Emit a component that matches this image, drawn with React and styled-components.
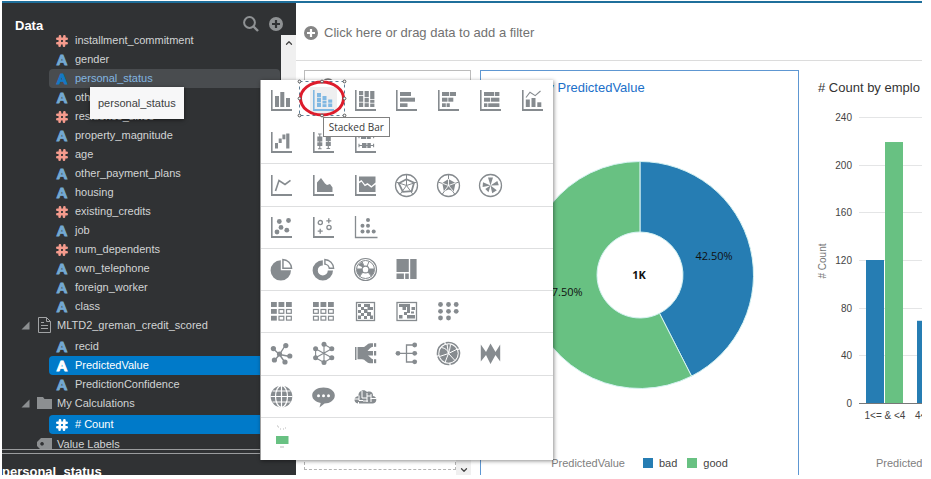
import React from "react";
import styled, { createGlobalStyle, css } from "styled-components";
import { ChevronDown, ChevronUp } from "lucide-react";

const GREY = "#868b8f";
const BLUE = "#267db3";
const GREEN = "#68c182";

const GlobalStyle = createGlobalStyle`
  * { box-sizing: border-box; }
  body {
    margin: 0;
    background: #fff;
    font-family: "Liberation Sans", Arial, sans-serif;
    font-size: 11px;
    color: #333;
  }
  button {
    font: inherit;
    color: inherit;
    background: none;
    border: 0;
    padding: 0;
    text-align: left;
    cursor: pointer;
  }
  ul { list-style: none; margin: 0; padding: 0; }
`;

const Page = styled.div`
  height: 100vh;
  padding: 1px 9px 4px 2px;
  overflow: hidden;
`;

const Frame = styled.div`
  position: relative;
  display: grid;
  grid-template-columns: 294px minmax(0, 1fr);
  height: 100%;
  border-top: 2px solid #1f6f9b;
`;

/* ---------- data sidebar ---------- */

const Sidebar = styled.aside`
  display: flex;
  flex-direction: column;
  min-height: 0;
  background: #303234;
  color: #d2d4d5;
  overflow: hidden;
`;

const SidebarHeader = styled.header`
  display: flex;
  align-items: center;
  gap: 10px;
  height: 32px;
  flex: none;
  padding: 9px 13px 0 13px;
`;

const SidebarTitle = styled.h2`
  flex: 1;
  margin: 0;
  font-size: 13px;
  line-height: 20px;
  color: #fff;
  padding-top: 4px;
`;

const ToolButton = styled.button`
  display: flex;
`;

const TreeArea = styled.div`
  display: flex;
  flex: 1;
  min-height: 0;
  overflow: hidden;
`;

const TreeList = styled.ul`
  flex: 1;
  min-width: 0;
  margin-top: -4px;
  padding-right: 1px;
`;

const ScrollTrack = styled.div`
  display: flex;
  justify-content: center;
  align-items: ${(p) => (p.$end ? "flex-end" : "flex-start")};
  flex: none;
  width: 15px;
  padding-top: ${(p) => (p.$end ? "0" : "3px")};
  background: #f0f0f0;
  color: #444;
`;

const FieldRow = styled.button`
  display: flex;
  align-items: center;
  gap: 6px;
  width: calc(100% - 47px);
  height: 19px;
  margin-left: 47px;
  padding-left: 6px;
  border-radius: 4px;
  line-height: 19px;
  ${(p) => p.$state === "hover" && css`
    background: #494c4f;
    color: #82b5e0;
  `}
  ${(p) => p.$state === "selected" && css`
    background: #007ac9;
    color: #fff;
  `}
`;

const GroupRow = styled.button`
  display: grid;
  grid-template-columns: 11px 15px auto;
  column-gap: 5px;
  align-items: center;
  width: 100%;
  height: ${(p) => (p.$open ? "18px" : "19px")};
  margin-bottom: ${(p) => (p.$open ? "3px" : "0")};
  padding-left: 19px;
  line-height: 18px;
`;

const FieldMark = styled.span`
  display: flex;
  align-items: center;
  justify-content: center;
  width: 14px;
  height: 19px;
  font-family: Lato, "Liberation Sans", sans-serif;
  font-size: 14px;
  font-weight: 900;
  -webkit-text-stroke: 1px currentColor;
  color: ${(p) => p.$color};
`;

const Details = styled.footer`
  flex: none;
  height: 26px;
  border-top: 1px solid #9a9c9e;
`;

const DetailsTitle = styled.h3`
  margin: 3px 0 0;
  padding-top: 10px;
  border-top: 1px solid #9a9c9e;
  font-size: 13px;
  line-height: 16px;
  color: #fff;
`;

const FieldTip = styled.div`
  position: absolute;
  left: 88px;
  top: 84px;
  padding: 0 8px;
  line-height: 32px;
  background: #f7f7f8;
  color: #3c3e40;
  box-shadow: 0 1px 4px rgba(0, 0, 0, 0.5);
`;

/* ---------- canvas ---------- */

const Main = styled.main`
  display: flex;
  flex-direction: column;
  min-width: 0;
  min-height: 0;
`;

const FilterBar = styled.div`
  display: flex;
  align-items: center;
  flex: none;
  height: 58px;
  padding: 2px 0 0 8px;
  border-bottom: 1px solid #dcdcdc;
`;

const FilterButton = styled.button`
  display: flex;
  align-items: center;
  gap: 6px;
  font-size: 13px;
  line-height: 20px;
  color: #717171;
`;

const Canvas = styled.div`
  display: grid;
  grid-template-columns: 167px minmax(0, 319fr) minmax(0, 114fr);
  grid-template-rows: minmax(0, 1fr);
  gap: 9px;
  flex: 1;
  min-height: 0;
  padding: 9px 0 0 8px;
`;

const Grammar = styled.section`
  display: flex;
  flex-direction: column;
  min-height: 0;
`;

const GrammarHeader = styled.div`
  flex: none;
  height: 32px;
  padding: 7px 16px;
  border: 1px solid #bcbcbc;
`;

const GrammarBody = styled.div`
  display: flex;
  flex: 1;
  min-height: 0;
`;

const DropZone = styled.div`
  flex: 1;
  margin-bottom: 5px;
  border: 1px dashed #b4b4b4;
`;

const Panel = styled.section`
  display: flex;
  flex-direction: column;
  min-width: 0;
  overflow: hidden;
  border: 1px solid ${(p) => (p.$selected ? "#5e97d2" : "transparent")};
  border-bottom: 0;
  ${(p) => !p.$selected && css`border-right: 0;`}
`;

const PanelTitle = styled.h3`
  flex: none;
  margin: 0;
  padding-left: ${(p) => (p.$accent ? "10px" : "9px")};
  font-size: 13px;
  font-weight: 400;
  line-height: 33px;
  white-space: nowrap;
  color: ${(p) => (p.$accent ? "#1b6fc9" : "#333")};
`;

const ChartArea = styled.div`
  display: flex;
  flex: 1;
  align-items: ${(p) => (p.$center ? "center" : "flex-start")};
  justify-content: ${(p) => (p.$center ? "center" : "flex-start")};
  min-height: 0;
  padding-bottom: ${(p) => (p.$center ? "6px" : "0")};
`;

const ChartSvg = styled.svg`
  flex: none;
  display: block;
  overflow: visible;
`;

const ChartLabel = styled.text`
  font-family: "Open Sans", "Noto Sans", sans-serif;
  font-size: 11px;
  font-weight: ${(p) => (p.$bold ? 700 : 400)};
  text-anchor: middle;
  fill: #111;
`;

const AxisLabel = styled.text`
  font-size: 10px;
  text-anchor: ${(p) => p.$anchor || "end"};
  fill: ${(p) => (p.$muted ? "#777" : "#444")};
`;

const Legend = styled.div`
  display: flex;
  align-items: center;
  justify-content: ${(p) => (p.$start ? "flex-start" : "center")};
  gap: 10px;
  flex: none;
  height: 24px;
  padding-left: ${(p) => (p.$start ? "67px" : "0")};
  color: #444;
`;

const LegendTitle = styled.span`
  padding-right: 8px;
  color: #808080;
`;

const LegendItem = styled.span`
  display: flex;
  align-items: center;
  gap: 6px;
`;

const Swatch = styled.span`
  width: 10px;
  height: 10px;
  background: ${(p) => p.$color};
`;

/* ---------- chart type menu ---------- */

const Menu = styled.div`
  position: absolute;
  left: 258px;
  top: 77px;
  display: grid;
  grid-template-rows: 2fr repeat(7, 1fr);
  width: 293px;
  height: 380px;
  background: #fff;
  border-left: 1px solid #a0a0a0;
  box-shadow: 1px 1px 4px rgba(0, 0, 0, 0.45);
`;

const MenuSection = styled.div`
  display: grid;
  grid-template-columns: repeat(7, 1fr);
  min-height: 0;
  border-bottom: 1px solid #dedfe0;
  &:last-child { border-bottom: 0; }
`;

const TypeButton = styled.button`
  position: relative;
  display: flex;
  align-items: center;
  justify-content: center;
  color: ${(p) => (p.$active ? "#80b8e2" : GREY)};
`;

const Glyph = styled.svg`
  display: block;
  flex: none;
  box-sizing: content-box;
  padding: 3px;
  fill: currentColor;
  background: ${(p) => (p.$active ? "#eeeff0" : "none")};
  overflow: visible;
`;

const Ring = styled.svg`
  position: absolute;
  left: -6px;
  top: -1px;
  overflow: visible;
`;

const TypeTip = styled.span`
  position: absolute;
  left: 20px;
  top: 37px;
  z-index: 1;
  padding: 0 5px;
  border: 1px solid #808080;
  background: #fff;
  color: #3a3a3a;
  font-family: "Open Sans", "Noto Sans", sans-serif;
  font-size: 10px;
  line-height: 18px;
  white-space: nowrap;
`;

/* ---------- icon drawings on a 21 x 21 grid ---------- */

const Axes = () => <path d="M0 0h1.6v19H21v2H0z" />;
const Rects = ({ list }) => list.map(([x, y, w, h], i) => <rect key={i} x={x} y={y} width={w} height={h} />);
const Dots = ({ list, r }) => list.map(([x, y], i) => <circle key={i} cx={x} cy={y} r={r} />);
const Line = ({ d, w = 1.5, ...rest }) => <path d={d} fill="none" stroke="currentColor" strokeWidth={w} {...rest} />;

const ICONS = {
  "Bar": <><Axes /><Rects list={[[4, 6, 4, 11], [9.3, 2, 4, 15], [15, 8, 4, 9]]} /></>,
  "Stacked Bar": <><Axes /><Rects list={[[4, 3, 4, 4], [4, 7.7, 4, 4.3], [4, 12.7, 4, 4.3], [9.5, 6, 4, 4.3], [9.5, 11, 4, 2.5], [9.5, 14.2, 4, 2.8], [15.2, 9.5, 4, 3.2], [15.2, 13.5, 4, 3.5]]} /></>,
  "100% Stacked Bar": <><Axes /><Rects list={[[4, 1, 4.2, 4], [4, 5.8, 4.2, 6], [4, 12.6, 4.2, 4.4], [9.6, 1, 4.2, 6.2], [9.6, 8, 4.2, 4.4], [9.6, 13.2, 4.2, 3.8], [15.2, 1, 4.2, 8.2], [15.2, 10, 4.2, 2.8], [15.2, 13.6, 4.2, 3.4]]} /></>,
  "Horizontal Bar": <><Axes /><Rects list={[[4, 2, 11, 4], [4, 7.7, 15, 4], [4, 13.3, 7.5, 3.7]]} /></>,
  "Horizontal Stacked": <><Axes /><Rects list={[[4, 2, 7, 4], [11.8, 2, 6.2, 4], [4, 7.7, 5.5, 4], [10.3, 7.7, 5, 4], [4, 13.3, 3.8, 3.7], [8.6, 13.3, 3.2, 3.7]]} /></>,
  "Horizontal 100% Stacked": <><Axes /><Rects list={[[4, 2, 10, 4], [14.8, 2, 4.6, 4], [4, 7.7, 6, 4], [10.8, 7.7, 8.6, 4], [4, 13.3, 3.4, 3.7], [8.2, 13.3, 11.2, 3.7]]} /></>,
  "Combo": <><Axes /><Rects list={[[3.8, 9.5, 4, 7.5], [9.5, 8, 4, 9], [15.3, 12.3, 4, 4.7]]} /><Line d="M4 7.5 8 2.2l5.2 3.4L18.5 1" w={1.1} /></>,
  "Waterfall": <><Axes /><Rects list={[[4, 11, 3, 5.5], [7.7, 6.5, 3, 4.5], [11.4, 2.5, 3, 4.8], [15.2, 1.5, 3.2, 15]]} /></>,
  "Boxplot": <><Axes /><Rects list={[[4.3, 4.5, 5, 5], [4.3, 10.3, 5, 3.7], [12.8, 3, 5, 6], [12.8, 9.8, 5, 4.2]]} /><Line d="M6.8 2v15M15.3 .5v16M5 2h3.6M5 16.8h3.6M13.5 .8h3.6M13.5 16.5h3.6" w={1.1} /></>,
  "Horizontal Boxplot": <><Axes /><Rects list={[[6, 2, 5, 5], [11.8, 2, 4, 5], [7, 11, 4.5, 5], [12.3, 11, 3.5, 5]]} /><Line d="M3.5 4.5h15.5M4 13.5h15M4 2.8v3.4M18.6 2.8v3.4M4 11.8v3.4M18.6 11.8v3.4" w={1.1} /></>,
  "Line": <><Axes /><Line d="M4.5 16 8 5.5l6 4 5.5-4.2" w={1.6} /></>,
  "Area": <><Axes /><path d="M4 17V7.5L8 3l4 5.5 2 1.5 3-1 2.5 3.5V17z" /></>,
  "100% Area": <><Axes /><path d="M4 1.5h16.5v6L16.500 11l-4-3L10 9.500 6.500 5 4 6.600z" /><path d="M4 8.200 6.500 6.800l3.300 4.500 2.700-1.500 3.800 3 4.200-3.300V17H4z" /></>,
  "Radar Line": <><Line d="M10.5 10.5V-.5M10.5 10.5 0 7M10.5 10.5 21 7M10.5 10.5 4 19.5M10.5 10.5l6.5 9" w={1} /><circle cx="10.5" cy="10.5" r="11" fill="none" stroke="currentColor" strokeWidth="1.3" /><Line d="m10.5 4.2 7.5 3.6-2.3 8.3-8.8.8L2.8 8.3z" w={1.8} /></>,
  "Radar Area": <><Line d="M10.5 10.5V-.5M10.5 10.5 0 7M10.5 10.5 21 7M10.5 10.5 4 19.5M10.5 10.5l6.5 9" w={1} /><circle cx="10.5" cy="10.5" r="11" fill="none" stroke="currentColor" strokeWidth="1.3" /><path d="m10.5 4 7 4-1.7 8.2-5.3-1.7-4.6 1.9L4.3 8z" /><path d="M10.5 4v6.5L4.3 8.2m6.2 2.3L17.5 8m-7 2.5-4.2 5.7m4.2-5.7 4.7 5.7" fill="none" stroke="#fff" strokeWidth=".9" /></>,
  "Radar Bar": <><circle cx="10.5" cy="10.5" r="11" fill="none" stroke="currentColor" strokeWidth="1.3" /><path d="M10.5 10.5 8 2.5h5zM10.5 10.5 3 7.3 2.6 12zM10.5 10.5l6.8-4.6 1.5 4.3zM10.5 10.5 5.3 14l3.2 3.2zM10.5 10.5l1.7 7.7 4.6-3z" /></>,
  "Scatter": <><Axes /><Dots r={2.4} list={[[8.3, 4.5], [17.5, 3.5], [10, 10.4], [6, 15], [15.8, 13.2]]} /></>,
  "Category Scatter": <><Axes /><Line d="M15.8 1.3v5M13.3 3.8h5M7.2 11.7v5M4.7 14.2h5" w={1.3} /><g fill="none" stroke="currentColor" strokeWidth="1.3"><circle cx="7.3" cy="5.6" r="2.1" /><circle cx="16" cy="10.4" r="2.1" /></g></>,
  "Dot Stack": <><Line d="M.5-1v21.5h22" w={1.3} /><Dots r={2} list={[[13, 3], [7.5, 8.8], [13, 8.8], [7.5, 14.6], [13, 14.6], [18.7, 14.6]]} /></>,
  "Pie": <><path d="M9.8 1.2v10H20A10.2 10.2 0 1 1 9.8 1.2z" /><path fillRule="evenodd" d="M11.2-.2A10 10 0 0 1 21.4 10H11.2zm1.5 1.7v7h7a8.5 8.5 0 0 0-7-7z" /></>,
  "Donut": <><path d="M9.8 1.2v5.2a5 5 0 1 0 5 5H20A10.2 10.2 0 1 1 9.8 1.2z" /><path fillRule="evenodd" d="M11.2-.2A10 10 0 0 1 21.4 10h-5.7a4.6 4.6 0 0 0-4.5-4.3zm1.4 1.6v3a6 6 0 0 1 4.3 4.2h3a8.8 8.8 0 0 0-7.3-7.2z" /></>,
  "Sunburst": <><g fill="none" stroke="currentColor"><circle cx="10.5" cy="10.5" r="11" strokeWidth="1.2" /><circle cx="10.5" cy="10.5" r="9" strokeWidth="1" /><circle cx="10.5" cy="10.5" r="3.4" strokeWidth="1.1" /><path d="M7 2.500 9.200 7.500M14 2.500l-2 5M8 13l-3.500 4.500M13 13l3.500 4.500" strokeWidth="1" /></g><path d="M1.700 9.500H7l1 3.300L4.700 17a9 9 0 0 1-3-7.500zM19.300 9.500 14 9.400l-1 3.400 3.400 4.200a9 9 0 0 0 2.900-7.500zM3 6l5 2.500L9 7.500 7 3z" /></>,
  "Treemap": <Rects list={[[0.5, 0, 12.3, 13], [14.2, 0, 6.4, 20], [0.5, 14.5, 7.4, 5.5], [9.2, 14.5, 3.6, 5.5]]} />,
  "Pivot Table": <><Rects list={[[0, 1, 5.8, 5], [7.5, 1, 5.8, 5], [15, 1, 5.8, 5], [0, 8, 5.8, 4.8], [0, 14.8, 5.8, 4.8]]} /><g fill="none" stroke="currentColor" strokeWidth="1.2"><rect x="8" y="8.5" width="4.8" height="3.8" /><rect x="15.5" y="8.5" width="4.8" height="3.8" /><rect x="8" y="15.3" width="4.8" height="3.8" /><rect x="15.5" y="15.3" width="4.8" height="3.8" /></g></>,
  "Table": <><Rects list={[[0, 1, 5.8, 5], [7.5, 1, 5.8, 5], [15, 1, 5.8, 5]]} /><g fill="none" stroke="currentColor" strokeWidth="1.2">{[0.5, 8, 15.5].map((x) => <React.Fragment key={x}><rect x={x} y="8.5" width="4.8" height="3.8" /><rect x={x} y="15.3" width="4.8" height="3.8" /></React.Fragment>)}</g></>,
  "Heat Matrix": <><rect x="1.5" y="1.5" width="18" height="18" fill="none" stroke="currentColor" strokeWidth="1.3" /><Rects list={[[3, 3, 3, 3], [9, 3, 6, 3], [6, 6, 3, 3], [15, 6, 3, 3], [3, 9, 3, 3], [9, 8, 3.5, 4], [12.5, 6, 2.5, 3], [6, 12, 3, 3], [12, 11, 4, 4], [3, 14.5, 3, 3.5], [9, 15, 3, 3], [15, 14.5, 3, 3.5]]} /></>,
  "Matrix": <><rect x="1" y="1.5" width="19.5" height="18" fill="none" stroke="currentColor" strokeWidth="1.3" /><Rects list={[[3, 3, 11, 3], [15.5, 6, 3.5, 3], [6.5, 6, 3.5, 3], [11, 6, 3, 6], [3, 14, 3.5, 3.5], [8, 11, 3, 3], [11, 14, 8, 3.5], [15, 10.5, 3, 2]]} /></>,
  "Dot Matrix": <Dots r={2.4} list={[[2.5, 3.5], [10.5, 3.5], [18.2, 3.5], [2.5, 10.3], [10.5, 10.3], [18.2, 10.3], [2.5, 17], [10.5, 17]]} />,
  "Network": <><Line d="M8.5 11.5 14.5 2M8.5 11.5 2 5.5M8.5 11.5l10.5 2M8.5 11.5 3.5 17.5M8.5 11.5l5.5 8" w={1.4} /><Dots r={2.6} list={[[14.8, 2.6], [2.4, 5.6], [18.8, 13], [3.4, 17], [14, 19], [8.5, 11]]} /></>,
  "Circular Network": <><Line d="M11 1v18.5M2.6 5.8 18.8 14.800M18.800 5.800 2.600 14.800M2.600 5.800v9M11 1.300l7.800 4.500M2.600 14.800l8.400 4.700M11 19.500l7.800-4.700" w={1.1} /><Dots r={2.5} list={[[11, 1.3], [2.6, 5.8], [18.8, 5.8], [2.6, 14.8], [18.8, 14.8], [11, 19.5]]} /></>,
  "Sankey": <><rect x="0" y="4" width="1.5" height="13" /><path d="M2.5 4H8c3 0 4-3.800 7.500-3.800H18V3.800c-2.500 0-3.500 2.500-5.500 4.200H18v4.500h-5c2.500 1.500 3 3.500 5 3.700v4h-3c-4-.3-4.500-4-8-4H2.500z" /><Rects list={[[19, 0.2, 2.2, 3.6], [19, 8, 2.2, 4.5], [19, 16.2, 2.2, 4]]} /></>,
  "Tree": <><Line d="M2 10.3h17M19 2h-8.5v17H19" w={1.3} /><Dots r={2.4} list={[[2, 10.3], [18.7, 2], [18.7, 10.3], [18.7, 18.8]]} /></>,
  "Chord": <><circle cx="10.5" cy="10.5" r="11" fill="none" stroke="currentColor" strokeWidth="1.6" strokeDasharray="15 1.2" /><circle cx="10.5" cy="10.5" r="9.2" /><path d="M10.5 10.5 9 1M10.5 10.5 19.5 6M10.5 10.5 1.5 13.500M10.500 10.500 17 17.500M3.500 4.500q6 1 7 6M10.500 10.500 7 19.500M12.500 1.500q-1 7-2 9" fill="none" stroke="#fff" strokeWidth="1" /></>,
  "Parallel": <path d="M.8 1.500 6 9l4.500-8.500L15.500 9l4.700-7.500v17L15.500 12l-5 9L6 12 .800 18.500z" />,
  "Map": <><circle cx="10.5" cy="10.5" r="10.8" /><g fill="none" stroke="#fff" strokeWidth="1.2"><path d="M10.5-.5v22M-.5 10.500h22M1.500 5h18M1.500 16h18" /><ellipse cx="10.5" cy="10.5" rx="6" ry="10.8" /></g></>,
  "Narrative": <><path d="M10.5 1.500c6.400 0 11.300 3.500 11.300 8s-4.900 8-10.300 8L6.500 21.500 7.700 17C3 16-.8 13.300-.8 9.500c0-4.500 4.900-8 11.300-8z" /><g fill="#fff"><Dots r={1.5} list={[[5.5, 9.8], [10.5, 9.8], [15.5, 9.8]]} /></g></>,
  "Tag Cloud": <><path d="M3 17.500c-5-1-4.500-7 .5-7.500C3 5 9 2.500 12 6c3.500-1.500 6.500.5 6 4 5 1 4 7.500-.5 7.500z" /><path d="M-1 13h5M4 9.500v5h4M7 5v7M7 12h5M12 7v9M12 10h4M15.500 12.500h6M16 8v8M8 15h5M3.500 16v2" fill="none" stroke="#fff" strokeWidth="1" /></>,
  "Custom": <g transform="translate(1 1)"><rect x="4" y="7" width="12.5" height="8" fill={GREEN} /><path d="M6-2h1M8 0h1M11 0h1M13-1h1M8 18h4M5-3h1" stroke="#aaa" strokeWidth=".8" /></g>,
};

const SECTIONS = [
  ["Bar", "Stacked Bar", "100% Stacked Bar", "Horizontal Bar", "Horizontal Stacked", "Horizontal 100% Stacked", "Combo", "Waterfall", "Boxplot", "Horizontal Boxplot"],
  ["Line", "Area", "100% Area", "Radar Line", "Radar Area", "Radar Bar"],
  ["Scatter", "Category Scatter", "Dot Stack"],
  ["Pie", "Donut", "Sunburst", "Treemap"],
  ["Pivot Table", "Table", "Heat Matrix", "Matrix", "Dot Matrix"],
  ["Network", "Circular Network", "Sankey", "Tree", "Chord", "Parallel"],
  ["Map", "Narrative", "Tag Cloud"],
  ["Custom"],
];

const SelectionRing = () => (
  <Ring width="50" height="40" viewBox="0 0 50 40" aria-hidden="true">
    <rect x="2.5" y="2.5" width="45" height="34" fill="none" stroke="#5f7f96" strokeDasharray="3 3" />
    <ellipse cx="25" cy="19.5" rx="21.5" ry="16.5" fill="none" stroke="#dd1c2c" strokeWidth="3" />
    <g fill="#fff" stroke="#555">
      {[[2.5, 2.5], [25, 2.5], [47.5, 2.5], [2.5, 19.5], [47.5, 19.5], [2.5, 36.5], [25, 36.5], [47.5, 36.5]].map(([x, y]) => (
        <circle key={`${x}-${y}`} cx={x} cy={y} r="1.4" />
      ))}
    </g>
  </Ring>
);

const ChartTypeMenu = () => (
  <Menu role="menu" aria-label="Chart type">
    {SECTIONS.map((names) => (
      <MenuSection key={names[0]} role="group">
        {names.map((name) => {
          const active = name === "Stacked Bar";
          return (
            <TypeButton key={name} role="menuitem" aria-label={name} $active={active}>
              <Glyph width="21" height="21" viewBox="0 0 21 21" $active={active}>{ICONS[name]}</Glyph>
              {active && <SelectionRing />}
              {active && <TypeTip role="tooltip">{name}</TypeTip>}
            </TypeButton>
          );
        })}
      </MenuSection>
    ))}
  </Menu>
);

/* ---------- sidebar content ---------- */

const PlusDisc = ({ cross, color = "#8f9294" }) => (
  <svg width="14" height="14" viewBox="0 0 14 14" aria-hidden="true">
    <circle cx="7" cy="7" r="7" fill={color} />
    <path d="M7 3v8M3 7h8" stroke={cross} strokeWidth="2.2" />
  </svg>
);

const SearchGlyph = () => (
  <svg width="16" height="16" viewBox="0 0 16 16" fill="none" stroke="#8f9294" aria-hidden="true">
    <circle cx="6.5" cy="6.5" r="5.4" strokeWidth="2" />
    <path d="m10.5 10.5 4.5 4.5" strokeWidth="2.4" />
  </svg>
);

const HashGlyph = () => (
  <svg width="12" height="12" viewBox="0 0 12 12" fill="none" stroke="currentColor" strokeWidth="2.6" strokeLinecap="round" aria-hidden="true">
    <path d="M4 1.300 3.600 10.700M8.400 1.300 8 10.700M1.300 3.800h9.400M1.300 8.200h9.400" />
  </svg>
);

const ExpandMark = () => (
  <svg width="9" height="9" viewBox="0 0 9 9" aria-hidden="true"><path d="M8.5.5v8h-8z" fill="#8c8f91" /></svg>
);

const GROUP_ICONS = {
  dataset: (
    <svg width="15" height="16" viewBox="0 0 15 16" fill="none" stroke="#a1a3a5" aria-hidden="true">
      <path d="M1.500.5h8l4 4v11h-12zM9.500.5v4h4M4 5.500h3M4 8.500h7M4 11.500h7" />
    </svg>
  ),
  folder: (
    <svg width="15" height="12" viewBox="0 0 15 12" aria-hidden="true"><path d="M0 0h6l1.500 2H15v10H0z" fill="#8c8f91" /></svg>
  ),
  tag: (
    <svg width="15" height="12" viewBox="0 0 15 12" aria-hidden="true">
      <path fillRule="evenodd" d="M4 0h11v12H4L0 8V4zm1 4a1.800 1.800 0 1 0 .1 0z" fill="#8c8f91" />
    </svg>
  ),
};

const FIELDS = [
  ["installment_commitment", "#"],
  ["gender", "A"],
  ["personal_status", "A", "hover"],
  ["other_parties", "A"],
  ["residence_since", "#"],
  ["property_magnitude", "A"],
  ["age", "#"],
  ["other_payment_plans", "A"],
  ["housing", "A"],
  ["existing_credits", "#"],
  ["job", "A"],
  ["num_dependents", "#"],
  ["own_telephone", "A"],
  ["foreign_worker", "A"],
  ["class", "A"],
];

const SCORED = [["recid", "A"], ["PredictedValue", "A", "selected"], ["PredictionConfidence", "A"]];

const markColor = (kind, state) => {
  if (state === "selected") return "#fff";
  if (state === "hover") return "#1479c4";
  return kind === "#" ? "#f59b8d" : "#74a9d2";
};

const Field = ({ name, kind, state }) => (
  <li>
    <FieldRow $state={state}>
      <FieldMark $color={markColor(kind, state)} aria-hidden="true">
        {kind === "#" ? <HashGlyph /> : "A"}
      </FieldMark>
      {name}
    </FieldRow>
  </li>
);

const Group = ({ name, icon, open }) => (
  <li>
    <GroupRow $open={open}>
      {open ? <ExpandMark /> : <span />}
      {GROUP_ICONS[icon]}
      <span>{name}</span>
    </GroupRow>
  </li>
);

const DataSidebar = () => (
  <Sidebar>
    <SidebarHeader>
      <SidebarTitle>Data</SidebarTitle>
      <ToolButton aria-label="Search"><SearchGlyph /></ToolButton>
      <ToolButton aria-label="Add"><PlusDisc cross="#303234" /></ToolButton>
    </SidebarHeader>
    <TreeArea>
      <TreeList>
        {FIELDS.map(([name, kind, state]) => <Field key={name} name={name} kind={kind} state={state} />)}
        <Group name="MLTD2_greman_credit_scored" icon="dataset" open />
        {SCORED.map(([name, kind, state]) => <Field key={name} name={name} kind={kind} state={state} />)}
        <Group name="My Calculations" icon="folder" open />
        <Field name="# Count" kind="#" state="selected" />
        <Group name="Value Labels" icon="tag" />
      </TreeList>
      <ScrollTrack><ChevronUp size={10} strokeWidth={3} /></ScrollTrack>
    </TreeArea>
    <Details><DetailsTitle>personal_status</DetailsTitle></Details>
  </Sidebar>
);

/* ---------- charts ---------- */

const point = (share, r) => {
  const a = share * 2 * Math.PI;
  return `${114 + r * Math.sin(a)} ${114 - r * Math.cos(a)}`;
};

const slice = (from, to) => {
  const large = to - from > 0.5 ? 1 : 0;
  return `M${point(from, 113.5)}A113.5 113.5 0 ${large} 1 ${point(to, 113.5)}L${point(to, 43)}A43 43 0 ${large} 0 ${point(from, 43)}Z`;
};

const DonutChart = () => (
  <ChartSvg width="228" height="228" viewBox="0 0 228 228" role="img" aria-label="Count by PredictedValue">
    <path d={slice(0, 0.425)} fill={BLUE} stroke="#d5f2f2" />
    <path d={slice(0.425, 0.9999)} fill={GREEN} stroke="#d5f2f2" />
    <ChartLabel x="188" y="99">42.50%</ChartLabel>
    <ChartLabel x="38" y="135">57.50%</ChartLabel>
    <ChartLabel x="113" y="118" $bold>1K</ChartLabel>
  </ChartSvg>
);

const BASE = 299;
const SCALE = 286 / 240;
const TICKS = [240, 200, 160, 120, 80, 40, 0];
const BARS = [[57, 120, BLUE], [76, 219, GREEN], [108, 69, BLUE]];

const BarChart = () => (
  <ChartSvg width="220" height="340" viewBox="0 0 220 340" role="img" aria-label="Count by employment">
    {TICKS.map((t) => (
      <React.Fragment key={t}>
        <path d={`M50 ${Math.round(BASE - t * SCALE) + 0.5}H220`} stroke={t ? "#e4e5e6" : "#777"} />
        <AxisLabel x="43" y={BASE - t * SCALE + 4}>{t}</AxisLabel>
      </React.Fragment>
    ))}
    {BARS.map(([x, v, color]) => (
      <rect key={x} x={x} y={BASE - v * SCALE} width="18" height={v * SCALE} fill={color} />
    ))}
    <AxisLabel x="76" y="315" $anchor="middle">{"1<= & <4"}</AxisLabel>
    <AxisLabel x="106" y="315" $anchor="start">{"4<= & <7"}</AxisLabel>
    <AxisLabel transform="translate(17 157) rotate(-90)" $anchor="middle" $muted># Count</AxisLabel>
  </ChartSvg>
);

export default function App() {
  return (
    <Page>
      <GlobalStyle />
      <Frame>
        <DataSidebar />
        <Main>
          <FilterBar>
            <FilterButton>
              <PlusDisc cross="#fff" color="#858585" />
              Click here or drag data to add a filter
            </FilterButton>
          </FilterBar>
          <Canvas>
            <Grammar>
              <GrammarHeader>
                <svg width="14" height="14" viewBox="0 0 14 14" aria-hidden="true">
                  <circle cx="7" cy="7" r="6" fill="none" stroke="#777" strokeWidth="1.5" />
                  <path d="M7 1v12" stroke="#777" />
                </svg>
              </GrammarHeader>
              <GrammarBody>
                <DropZone />
                <ScrollTrack $end><ChevronDown size={10} strokeWidth={3} /></ScrollTrack>
              </GrammarBody>
            </Grammar>
            <Panel $selected>
              <PanelTitle $accent># Count by PredictedValue</PanelTitle>
              <ChartArea $center><DonutChart /></ChartArea>
              <Legend>
                <LegendTitle>PredictedValue</LegendTitle>
                <LegendItem><Swatch $color={BLUE} />bad</LegendItem>
                <LegendItem><Swatch $color={GREEN} />good</LegendItem>
              </Legend>
            </Panel>
            <Panel>
              <PanelTitle># Count by emplo</PanelTitle>
              <ChartArea><BarChart /></ChartArea>
              <Legend $start><LegendTitle>PredictedValue</LegendTitle></Legend>
            </Panel>
          </Canvas>
        </Main>
        <FieldTip role="tooltip">personal_status</FieldTip>
        <ChartTypeMenu />
      </Frame>
    </Page>
  );
}
